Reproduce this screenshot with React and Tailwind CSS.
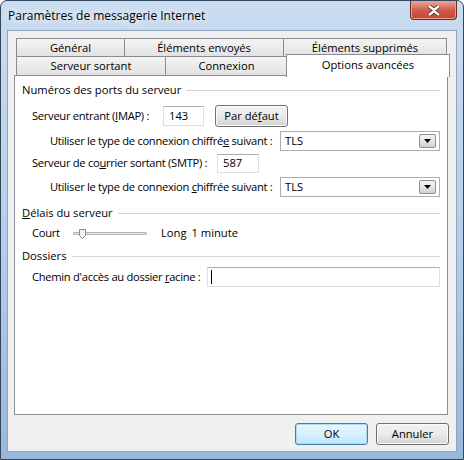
import React from "react";

// mnemonic letter, Windows style
const U = ({ children }) => <span className="underline underline-offset-[1px]">{children}</span>;

const Tab = ({ w, children, first }) => (
  <div
    className={`flex h-full items-center justify-center border border-[#898c95] bg-gradient-to-b from-[#f4f4f4] to-[#e2e2e2] ${w} ${first ? "" : "-ml-px"}`}
  >
    {children}
  </div>
);

const Header = ({ children, className = "" }) => (
  <div className={`flex h-[16px] items-center whitespace-nowrap ${className}`}>
    <span className="pr-[5px]">{children}</span>
    <div className="h-px flex-1 bg-[#d5d5d5]" />
  </div>
);

const Label = ({ w, children }) => (
  <span className={`shrink-0 tracking-[-0.3px] ${w}`}>{children}</span>
);

const TextBox = ({ w, h = "h-[20px]", children }) => (
  <div
    className={`flex shrink-0 items-center border border-[#dbdfe6] border-t-[#abadb3] bg-white pl-[5px] ${w} ${h}`}
  >
    {children}
  </div>
);

const Select = ({ value }) => (
  <div className="flex h-[20px] w-[160px] shrink-0 items-center justify-between border border-[#abadb3] bg-white pl-[4px] pr-[3px]">
    <span>{value}</span>
    <div className="flex h-[14px] w-[17px] items-center justify-center rounded-[2px] border border-[#8e8f8f] bg-gradient-to-b from-[#f2f2f2] via-[#e6e6e6] to-[#cfcfcf]">
      <svg width="7" height="4" viewBox="0 0 7 4">
        <path d="M0 0h7L3.5 4z" fill="#000" />
      </svg>
    </div>
  </div>
);

const Button = ({ children, primary }) => (
  <div
    className={[
      "flex h-[22px] w-[73px] items-center justify-center rounded-[3px] border whitespace-nowrap",
      primary
        ? "border-[#3c7fb1] bg-gradient-to-b from-[#eaf6fd] via-[#d9f0fc] to-[#bee6fd] shadow-[inset_0_0_0_1px_#a9dcf6]"
        : "border-[#707070] bg-gradient-to-b from-[#f2f2f2] via-[#ebebeb] to-[#d3d3d3] shadow-[inset_0_0_0_1px_#fcfcfc]",
    ].join(" ")}
  >
    {children}
  </div>
);

export default function App() {
  return (
    <div className="h-[460px] w-[464px] overflow-hidden bg-white font-['Segoe_UI','Open_Sans',sans-serif] text-[11.2px] leading-none text-black">
      <div className="relative flex h-full flex-col rounded-t-[7px] border border-[#34465c] bg-gradient-to-b from-[#c9dcf0] via-[#b7cfea] to-[#9ab8da]">
        {/* title bar */}
        <div className="flex h-[29px] items-center pl-[7px]">
          <span className="text-[12px] [text-shadow:0_0_8px_#fff,0_0_12px_#fff]">Paramètres de messagerie Internet</span>
        </div>
        <div className="absolute right-[6px] top-0 flex h-[19px] w-[47px] items-center justify-center rounded-b-[4px] border border-t-0 border-[#6b2a22] bg-gradient-to-b from-[#e9a99b] via-[#cf5c4c] to-[#c8432f] shadow-[inset_0_0_0_1px_#eba090]">
          <svg width="14" height="11" viewBox="0 0 14 11">
            <path d="M2 1l5 4 5-4M2 10l5-4 5 4" stroke="#4a2a2a" strokeWidth="4" fill="none" />
            <path d="M2 1l5 4 5-4M2 10l5-4 5 4" stroke="#fff" strokeWidth="2.4" fill="none" />
          </svg>
        </div>

        {/* client area */}
        <div className="mx-[6px] mb-[7px] flex flex-1 flex-col border border-[#8fa5bf] bg-[#f0f0f0] pl-[6px] pt-[7px]">
          <div className="ml-[2px] flex h-[19px] whitespace-nowrap">
            <Tab w="w-[109px]" first>Général</Tab>
            <Tab w="w-[160px]">Éléments envoyés</Tab>
            <Tab w="w-[164px]">Éléments supprimés</Tab>
          </div>
          <div className="relative z-10 -mt-px ml-[2px] flex h-[20px] whitespace-nowrap">
            <Tab w="w-[150px]" first>Serveur sortant</Tab>
            <Tab w="w-[123px]">Connexion</Tab>
            <div className="-ml-[2px] -mt-[2px] flex h-[23px] w-[164px] items-start justify-center border border-b-0 border-[#898c95] bg-white pt-[4px]">
              Options avancées
            </div>
          </div>

          {/* panel */}
          <div className="-mt-px flex h-[340px] w-[434px] flex-col whitespace-nowrap border border-[#898c95] bg-white pl-[7px] pr-[7px] pt-[6px]">
            <Header>Numéros des ports du serveur</Header>

            <div className="mt-[7px] flex h-[22px] items-center pl-[10px]">
              <Label w="w-[131px]">
                Serveur entrant (<U>I</U>MAP) :
              </Label>
              <TextBox w="w-[41px]">143</TextBox>
              <div className="ml-[11px]">
                <Button>
                  Par dé<U>f</U>aut
                </Button>
              </div>
            </div>

            <div className="mt-[3px] flex h-[22px] items-center pl-[28px]">
              <Label w="w-[230px]">
                Utiliser le type de connexion chiffré<U>e</U> suivant :
              </Label>
              <Select value="TLS" />
            </div>

            <div className="flex h-[22px] items-center pl-[10px]">
              <Label w="w-[185px]">
                Serveur de co<U>u</U>rrier sortant (SMTP) :
              </Label>
              <TextBox w="w-[42px]" h="h-[19px]">587</TextBox>
            </div>

            <div className="mt-[2px] flex h-[22px] items-center pl-[28px]">
              <Label w="w-[230px]">
                Utiliser le type de connexion <U>c</U>hiffrée suivant :
              </Label>
              <Select value="TLS" />
            </div>

            <Header className="mt-[7px]">
              <U>D</U>élais du serveur
            </Header>

            <div className="mt-[4px] flex h-[16px] items-center pl-[10px]">
              <Label w="w-[41px]">Court</Label>
              <div className="relative h-[3px] w-[74px] shrink-0 rounded-[1px] border border-[#b4b4b4] bg-[#e7eaea]">
                <svg className="absolute -top-[4px] left-[5px]" width="7" height="10" viewBox="0 0 7 10">
                  <path d="M0.5 0.5h6v6l-3 3l-3-3z" fill="#f4f4f4" stroke="#8c8c8c" />
                </svg>
              </div>
              <span className="ml-[14px]">Long</span>
              <span className="ml-[5px]">1 minute</span>
            </div>

            <Header className="mt-[7px]">Dossiers</Header>

            <div className="mt-[2px] flex h-[22px] items-center pl-[10px]">
              <Label w="w-[175px]">
                Chemin d'accès au dossier <U>r</U>acine :
              </Label>
              <TextBox w="w-[233px]">
                <div className="ml-[-2px] h-[14px] w-px bg-black" />
              </TextBox>
            </div>
          </div>

          {/* dialog buttons */}
          <div className="mt-[8px] flex justify-end gap-[8px] pr-[7px]">
            <Button primary>OK</Button>
            <Button>Annuler</Button>
          </div>
        </div>
      </div>
    </div>
  );
}
